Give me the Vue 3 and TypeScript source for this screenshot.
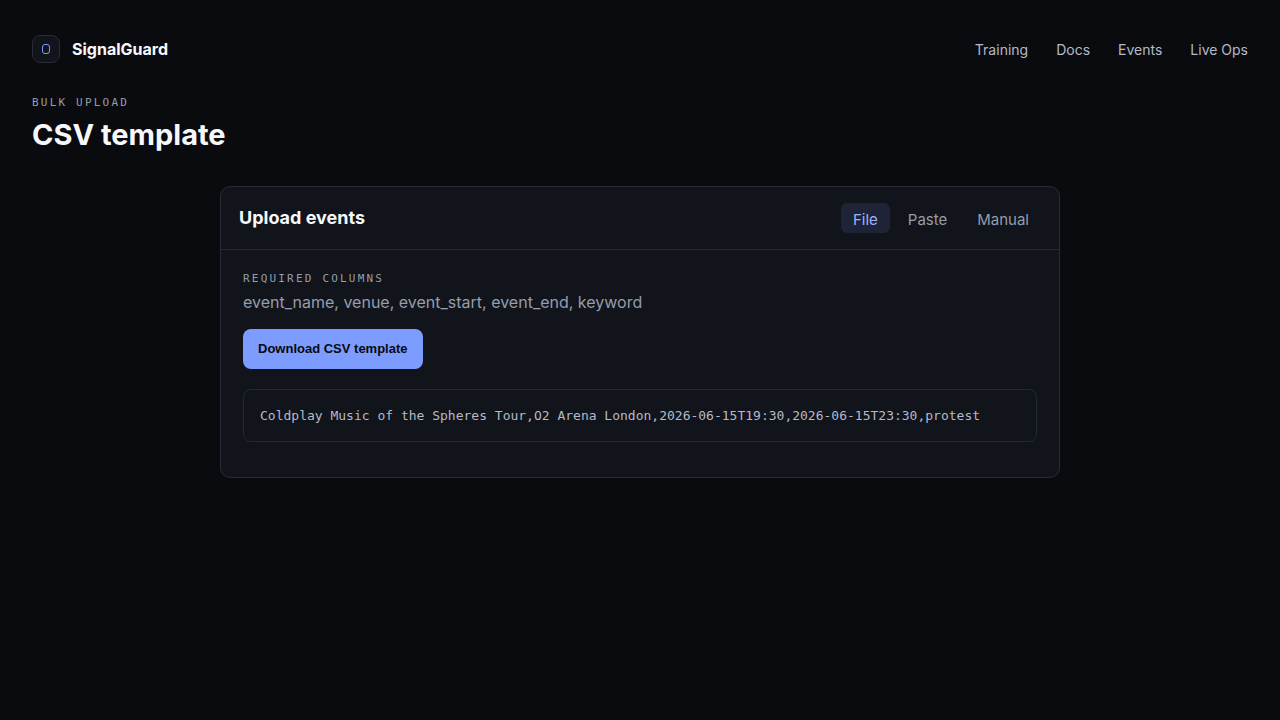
<script setup lang="ts">
import { ref } from 'vue'

type Tab = 'File' | 'Paste' | 'Manual'

const links: string[] = ['Training', 'Docs', 'Events', 'Live Ops']
const tabs: Tab[] = ['File', 'Paste', 'Manual']
const activeTab = ref<Tab>('File')
const columns: string[] = ['event_name', 'venue', 'event_start', 'event_end', 'keyword']
const sampleRow = 'Coldplay Music of the Spheres Tour,O2 Arena London,2026-06-15T19:30,2026-06-15T23:30,protest'
</script>

<template>
  <div class="page">
    <header class="topbar">
      <a class="brand" href="#">
        <span class="brand-mark">
          <svg width="10" height="12" viewBox="0 0 10 12" aria-hidden="true">
            <rect x="1.5" y="1.5" width="7" height="9" rx="2.5" fill="none" stroke="#7c9cff" />
          </svg>
        </span>
        <span>SignalGuard</span>
      </a>
      <nav class="nav">
        <a v-for="link in links" :key="link" href="#">{{ link }}</a>
      </nav>
    </header>

    <main>
      <p class="eyebrow">BULK UPLOAD</p>
      <h1>CSV template</h1>

      <section class="card">
        <div class="card-head">
          <h2>Upload events</h2>
          <div class="tabs" role="tablist">
            <button
              v-for="tab in tabs"
              :key="tab"
              type="button"
              role="tab"
              class="tab"
              :class="{ active: tab === activeTab }"
              :aria-selected="tab === activeTab"
              @click="activeTab = tab"
            >{{ tab }}</button>
          </div>
        </div>
        <div class="card-body">
          <p class="eyebrow">REQUIRED COLUMNS</p>
          <p class="columns">{{ columns.join(', ') }}</p>
          <button type="button" class="download">Download CSV template</button>
          <pre class="sample">{{ sampleRow }}</pre>
        </div>
      </section>
    </main>
  </div>
</template>

<style>
body {
  margin: 0;
  background: #0a0b0f;
}
</style>

<style scoped>
.page {
  box-sizing: border-box;
  min-height: 100vh;
  padding: 34px 32px;
  font-family: Inter, "Liberation Sans", sans-serif;
  color: #f7f8fc;
}
.topbar {
  display: flex;
  align-items: center;
  justify-content: space-between;
  height: 30px;
}
.brand {
  display: flex;
  align-items: center;
  gap: 12px;
  font-size: 16px;
  font-weight: 700;
  color: inherit;
  text-decoration: none;
}
.brand-mark {
  box-sizing: border-box;
  display: grid;
  place-items: center;
  width: 28px;
  height: 28px;
  border: 1px solid #282c35;
  border-radius: 8px;
  background: #11141b;
}
.nav {
  display: flex;
  gap: 28px;
  font-size: 14px;
}
.nav a {
  color: #b4bac8;
  text-decoration: none;
}
.eyebrow {
  margin: 0;
  font-family: "DejaVu Sans Mono", monospace;
  font-size: 11px;
  line-height: 16px;
  letter-spacing: 0.2em;
  color: #969dac;
}
main > .eyebrow {
  margin-top: 31px;
}
h1 {
  margin: 6px 0 0;
  font-size: 29px;
  line-height: 36px;
  font-weight: 700;
}
.card {
  max-width: 838px;
  margin: 33px auto 0;
  border: 1px solid #282c35;
  border-radius: 10px;
  background: #11141b;
}
.card-head {
  display: flex;
  align-items: center;
  justify-content: space-between;
  padding: 16px 18px;
  border-bottom: 1px solid #242831;
}
h2 {
  margin: 0;
  font-size: 18px;
  line-height: 24px;
  font-weight: 700;
}
.tabs {
  display: flex;
  gap: 6px;
}
.tab {
  height: 30px;
  padding: 2px 12px 0;
  border: 0;
  border-radius: 6px;
  background: transparent;
  font-family: inherit;
  font-size: 15px;
  color: #969dac;
}
.tab.active {
  background: #1e2436;
  color: #9bb2ff;
}
.card-body {
  padding: 21px 22px 35px;
}
.columns {
  margin: 5px 0 17px;
  font-size: 16px;
  line-height: 20px;
  color: #969dac;
}
.download {
  height: 40px;
  padding: 0 15px 2px;
  border: 0;
  border-radius: 8px;
  background: #7c9cff;
  font-family: "Liberation Sans", Arial, sans-serif;
  font-size: 13px;
  font-weight: 700;
  color: #090a0e;
}
.sample {
  margin: 20px 0 0;
  padding: 16px;
  border: 1px solid #242831;
  border-radius: 8px;
  overflow-x: auto;
  font-family: "DejaVu Sans Mono", monospace;
  font-size: 13px;
  line-height: 19px;
  color: #b4bac8;
}
</style>
